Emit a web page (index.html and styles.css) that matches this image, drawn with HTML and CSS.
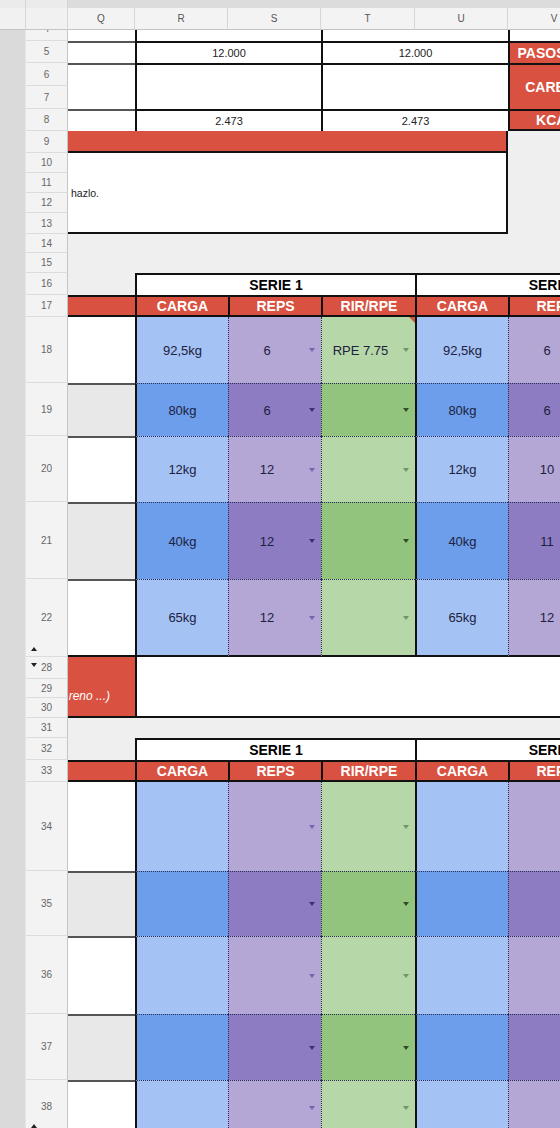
FILE: index.html
```html
<!DOCTYPE html>
<html lang="es">
<head>
    <meta charset="UTF-8">
    <meta name="viewport" content="width=device-width, initial-scale=1.0">
    <title>Entreno</title>
    <link rel="stylesheet" href="styles.css">
</head>
<body>
    <div class="sheet">
        <div class="strip"></div>

        <!-- barra superior y cabecera de columnas -->
        <div class="corner top"></div><div class="corner top"></div><div class="topbar"></div>
        <div class="corner"></div><div class="corner"></div>
        <div class="ch">Q</div><div class="ch">R</div><div class="ch">S</div>
        <div class="ch">T</div><div class="ch">U</div><div class="ch">V</div><div class="ch">W</div>

        <!-- resumen -->
        <div class="rh cut">4</div>
        <div class="c wh"></div>
        <div class="c wh w2 bl"></div>
        <div class="c wh w2 bl"></div>
        <div class="c wh bl"></div>
        <div class="c wh"></div>

        <div class="rh">5</div>
        <div class="c wh gt"></div>
        <div class="c wh w2 bl bt num">12.000</div>
        <div class="c wh w2 bl bt num">12.000</div>
        <div class="c lbl bl bt">PASOS/DÍA</div>
        <div class="c wh bt"></div>

        <div class="rh">6</div>
        <div class="c wh h2 gt"></div>
        <div class="c wh w2 h2 bl bt"></div>
        <div class="c wh w2 h2 bl bt"></div>
        <div class="c lbl h2 bl bt">CARBOS</div>
        <div class="c wh h2 bt"></div>
        <div class="rh">7</div>

        <div class="rh">8</div>
        <div class="c wh gt"></div>
        <div class="c wh w2 bl bt num">2.473</div>
        <div class="c wh w2 bl bt num">2.473</div>
        <div class="c lbl bl bt bb">KCAL</div>
        <div class="c wh bt bb"></div>

        <div class="rh">9</div>
        <div class="c red w5 br bb"></div>
        <div class="c w2"></div>

        <div class="rh">10</div>
        <div class="c wh w5 h4 br bb memo">hazlo.</div>
        <div class="c w2 h4"></div>
        <div class="rh">11</div>
        <div class="rh">12</div>
        <div class="rh">13</div>

        <div class="rh">14</div><div class="c w7"></div>
        <div class="rh">15</div><div class="c w7"></div>

        <!-- bloque 1 -->
        <div class="rh">16</div>
        <div class="c"></div>
        <div class="c w3 serie">SERIE 1</div>
        <div class="c w3 serie">SERIE 2</div>

        <div class="rh">17</div>
        <div class="c hd"></div>
        <div class="c hd bl">CARGA</div>
        <div class="c hd bl">REPS</div>
        <div class="c hd bl">RIR/RPE</div>
        <div class="c hd bl">CARGA</div>
        <div class="c hd bl">REPS</div>
        <div class="c hd bl">RIR/RPE</div>

        <div class="band first">
            <div class="rh">18</div>
            <div class="c q"></div>
            <div class="c carga">92,5kg</div>
            <div class="c reps"><span class="v">6</span><i class="arr"></i></div>
            <div class="c rpe note"><span class="v">RPE 7.75</span><i class="arr"></i></div>
            <div class="c carga">92,5kg</div>
            <div class="c reps"><span class="v">6</span><i class="arr"></i></div>
            <div class="c rpe"><span class="v"></span><i class="arr"></i></div>
        </div>
        <div class="band dk">
            <div class="rh">19</div>
            <div class="c q"></div>
            <div class="c carga">80kg</div>
            <div class="c reps"><span class="v">6</span><i class="arr"></i></div>
            <div class="c rpe"><span class="v"></span><i class="arr"></i></div>
            <div class="c carga">80kg</div>
            <div class="c reps"><span class="v">6</span><i class="arr"></i></div>
            <div class="c rpe"><span class="v"></span><i class="arr"></i></div>
        </div>
        <div class="band">
            <div class="rh">20</div>
            <div class="c q"></div>
            <div class="c carga">12kg</div>
            <div class="c reps"><span class="v">12</span><i class="arr"></i></div>
            <div class="c rpe"><span class="v"></span><i class="arr"></i></div>
            <div class="c carga">12kg</div>
            <div class="c reps"><span class="v">10</span><i class="arr"></i></div>
            <div class="c rpe"><span class="v"></span><i class="arr"></i></div>
        </div>
        <div class="band dk">
            <div class="rh">21</div>
            <div class="c q"></div>
            <div class="c carga">40kg</div>
            <div class="c reps"><span class="v">12</span><i class="arr"></i></div>
            <div class="c rpe"><span class="v"></span><i class="arr"></i></div>
            <div class="c carga">40kg</div>
            <div class="c reps"><span class="v">11</span><i class="arr"></i></div>
            <div class="c rpe"><span class="v"></span><i class="arr"></i></div>
        </div>
        <div class="band last">
            <div class="rh">22<i class="tog up"></i></div>
            <div class="c q"></div>
            <div class="c carga">65kg</div>
            <div class="c reps"><span class="v">12</span><i class="arr"></i></div>
            <div class="c rpe"><span class="v"></span><i class="arr"></i></div>
            <div class="c carga">65kg</div>
            <div class="c reps"><span class="v">12</span><i class="arr"></i></div>
            <div class="c rpe"><span class="v"></span><i class="arr"></i></div>
        </div>

        <!-- observaciones -->
        <div class="rh">28<i class="tog down"></i></div>
        <div class="c red h3 bb obs">reno ...)</div>
        <div class="c wh w6 h3 bl bb"></div>
        <div class="rh">29</div>
        <div class="rh">30</div>

        <div class="rh">31</div><div class="c w7"></div>

        <!-- bloque 2 -->
        <div class="rh">32</div>
        <div class="c"></div>
        <div class="c w3 serie">SERIE 1</div>
        <div class="c w3 serie">SERIE 2</div>

        <div class="rh">33</div>
        <div class="c hd"></div>
        <div class="c hd bl">CARGA</div>
        <div class="c hd bl">REPS</div>
        <div class="c hd bl">RIR/RPE</div>
        <div class="c hd bl">CARGA</div>
        <div class="c hd bl">REPS</div>
        <div class="c hd bl">RIR/RPE</div>

        <div class="band first">
            <div class="rh">34</div>
            <div class="c q"></div>
            <div class="c carga"></div>
            <div class="c reps"><span class="v"></span><i class="arr"></i></div>
            <div class="c rpe"><span class="v"></span><i class="arr"></i></div>
            <div class="c carga"></div>
            <div class="c reps"><span class="v"></span><i class="arr"></i></div>
            <div class="c rpe"><span class="v"></span><i class="arr"></i></div>
        </div>
        <div class="band dk">
            <div class="rh">35</div>
            <div class="c q"></div>
            <div class="c carga"></div>
            <div class="c reps"><span class="v"></span><i class="arr"></i></div>
            <div class="c rpe"><span class="v"></span><i class="arr"></i></div>
            <div class="c carga"></div>
            <div class="c reps"><span class="v"></span><i class="arr"></i></div>
            <div class="c rpe"><span class="v"></span><i class="arr"></i></div>
        </div>
        <div class="band">
            <div class="rh">36</div>
            <div class="c q"></div>
            <div class="c carga"></div>
            <div class="c reps"><span class="v"></span><i class="arr"></i></div>
            <div class="c rpe"><span class="v"></span><i class="arr"></i></div>
            <div class="c carga"></div>
            <div class="c reps"><span class="v"></span><i class="arr"></i></div>
            <div class="c rpe"><span class="v"></span><i class="arr"></i></div>
        </div>
        <div class="band dk">
            <div class="rh">37</div>
            <div class="c q"></div>
            <div class="c carga"></div>
            <div class="c reps"><span class="v"></span><i class="arr"></i></div>
            <div class="c rpe"><span class="v"></span><i class="arr"></i></div>
            <div class="c carga"></div>
            <div class="c reps"><span class="v"></span><i class="arr"></i></div>
            <div class="c rpe"><span class="v"></span><i class="arr"></i></div>
        </div>
        <div class="band">
            <div class="rh">38<i class="tog up"></i></div>
            <div class="c q"></div>
            <div class="c carga"></div>
            <div class="c reps"><span class="v"></span><i class="arr"></i></div>
            <div class="c rpe"><span class="v"></span><i class="arr"></i></div>
            <div class="c carga"></div>
            <div class="c reps"><span class="v"></span><i class="arr"></i></div>
            <div class="c rpe"><span class="v"></span><i class="arr"></i></div>
        </div>
    </div>
</body>
</html>
```

FILE: styles.css
```css
html, body {
    margin: 0;
    padding: 0;
    overflow: hidden;
    background: #efefef;
    font-family: "Liberation Sans", Arial, sans-serif;
}
.sheet {
    display: grid;
    width: 694px;
    grid-template-columns: 26px 42px 67px 93px 93px 94px 93px 93px 93px;
    grid-template-rows:
        8px 22px 11px 22px 23px 23px 22px 22px
        20px 20px 20px 21px 19px 20px 22px 22px
        66px 53px 66px 77px 78px
        22px 19px 20px 20px 22px 22px
        89px 65px 78px 66px 54px;
    background: #efefef;
}
.strip {
    grid-column: 1;
    grid-row: 3 / -1;
    background: #dadada;
    border-right: 1px solid #e6e6e6;
}
.topbar {
    grid-column: span 7;
    background: #dcdcdc;
}
.corner {
    background: #f1f1f1;
    border-right: 1px solid #d6d6d6;
    border-bottom: 1px solid #c4c4c4;
}
.corner.top {
    background: #ebebeb;
    border-bottom: 0;
}
.ch {
    display: flex;
    align-items: center;
    justify-content: center;
    background: #f3f3f3;
    border-right: 1px solid #d6d6d6;
    border-bottom: 1px solid #c4c4c4;
    color: #555;
    font-size: 10px;
}
.rh {
    position: relative;
    display: flex;
    align-items: center;
    justify-content: center;
    background: #f3f3f3;
    border-bottom: 1px solid #dcdcdc;
    border-right: 1px solid #c6c6c6;
    color: #666;
    font-size: 10px;
}
.rh.cut {
    align-items: flex-end;
    overflow: hidden;
    padding-bottom: 6px;
}
.tog {
    position: absolute;
    left: 5px;
    width: 0;
    height: 0;
    border-left: 3px solid transparent;
    border-right: 3px solid transparent;
}
.tog.up {
    bottom: 5px;
    border-bottom: 4px solid #222;
}
.tog.down {
    top: 6px;
    border-top: 4px solid #222;
}

/* celdas */
.c {
    display: flex;
    align-items: center;
    justify-content: center;
    min-width: 0;
    overflow: hidden;
    white-space: nowrap;
    color: #1d2140;
}
.wh { background: #fff; }
.red { background: #d95140; }
.w2 { grid-column: span 2; }
.w3 { grid-column: span 3; }
.w5 { grid-column: span 5; }
.w6 { grid-column: span 6; }
.w7 { grid-column: span 7; }
.h2 { grid-row: span 2; }
.h3 { grid-row: span 3; }
.h4 { grid-row: span 4; }
.bl { border-left: 2px solid #111; }
.bt { border-top: 2px solid #111; }
.bb { border-bottom: 2px solid #111; }
.br { border-right: 2px solid #111; }
.gt { border-top: 2px solid #555; }
.num {
    font-size: 11px;
    color: #222;
}
.lbl {
    background: #d95140;
    color: #fff;
    font-weight: bold;
    font-size: 14px;
}
.memo {
    justify-content: flex-start;
    padding-left: 3px;
    font-size: 10.5px;
    color: #222;
}
.obs {
    justify-content: flex-end;
    align-items: flex-end;
    padding: 0 25px 13px 0;
    color: #fff;
    font-style: italic;
    font-size: 12px;
}
.serie {
    background: #fff;
    border-top: 2px solid #111;
    border-left: 2px solid #111;
    color: #000;
    font-weight: bold;
    font-size: 14px;
}
.hd {
    background: #d95140;
    border-top: 2px solid #111;
    border-bottom: 2px solid #111;
    color: #fff;
    font-weight: bold;
    font-size: 14px;
}

/* filas de series */
.band {
    display: contents;
}
.band .q {
    background: #fff;
    border-top: 2px solid #555;
}
.band.dk .q { background: #e8e8e8; }
.band .carga,
.band .reps,
.band .rpe {
    border-top: 1px dotted #2a2c58;
    font-size: 13px;
}
.band.first .q,
.band.first .carga,
.band.first .reps,
.band.first .rpe {
    border-top: 0;
}
.band.last .c {
    border-bottom: 2px solid #111;
}
.band .carga {
    background: #a4c2f4;
    border-left: 2px solid #111;
}
.band .reps {
    background: #b4a7d6;
    border-left: 1px dotted #2a2c58;
}
.band .rpe {
    background: #b6d7a8;
    border-left: 1px dotted #2a2c58;
}
.band.dk .carga { background: #6d9eeb; }
.band.dk .reps { background: #8e7cc3; }
.band.dk .rpe { background: #93c47d; }
.v {
    flex: 1;
    text-align: center;
}
.arr {
    flex: none;
    width: 0;
    height: 0;
    margin: 0 6px 0 4px;
    border-left: 3.5px solid transparent;
    border-right: 3.5px solid transparent;
    border-top: 4px solid currentColor;
}
.reps .arr { color: #7566aa; }
.rpe .arr { color: #74936a; }
.band.dk .reps .arr { color: #3b2f70; }
.band.dk .rpe .arr { color: #2f4d2a; }
.note {
    position: relative;
}
.note::after {
    content: "";
    position: absolute;
    top: 0;
    right: 0;
    border-top: 6px solid #c85a3a;
    border-left: 6px solid transparent;
}
```
